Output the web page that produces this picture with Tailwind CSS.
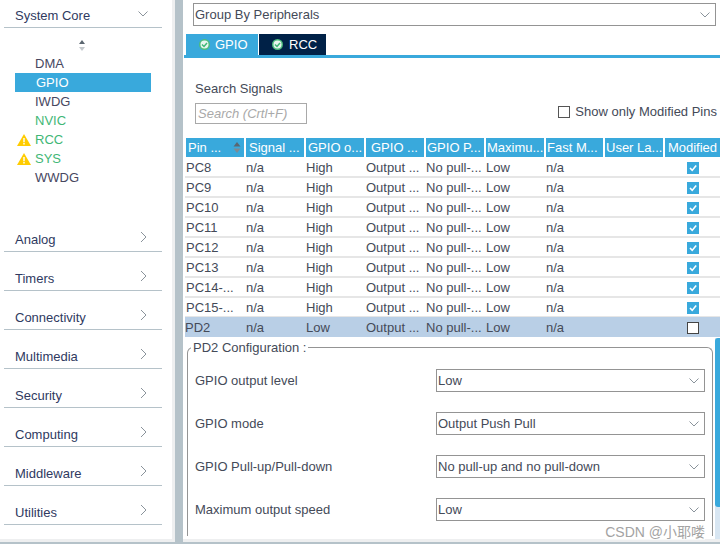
<!DOCTYPE html>
<html lang="en">
<head>
<meta charset="UTF-8">
<title>GPIO Configuration</title>
<script src="https://cdn.jsdelivr.net/npm/@tailwindcss/browser@4"></script>
</head>
<body class="m-0 overflow-hidden bg-white font-['Liberation_Sans','Noto_Sans_CJK_SC',sans-serif] text-[13px] text-[#444a58]">
<div class="flex h-[549px] w-[720px] flex-col overflow-hidden">
<div class="flex h-[542px]">

<!-- left categories -->
<aside class="h-full w-[175px] shrink-0 border-r-[3px] border-b-[3px] border-[#eeeff0] pl-1 text-[#2f3a5f]">
  <div class="flex h-[28px] w-[158px] items-start justify-between border-b border-[#b5c2c9] pt-[8px] pl-[11px] pr-[14px]">
    <span class="leading-[15px]">System Core</span>
    <svg class="mt-[3px]" width="10" height="6" viewBox="0 0 10 6" fill="none" stroke="#8a939b"><path d="M.5.5L5 5 9.5.5"/></svg>
  </div>
  <div class="flex h-[23px] w-[158px] items-end justify-center pr-[3px]">
    <svg width="8" height="11" viewBox="0 0 8 11"><path d="M4 0l3 4H1z" fill="#5b6670"/><path d="M4 11l3-4H1z" fill="#c3c8cc"/></svg>
  </div>
  <ul class="mt-[3px] h-[172px] leading-[19px]">
    <li class="h-[19px] pl-[31px] text-[#47475f]">DMA</li>
    <li class="ml-[11px] h-[19px] w-[136px] bg-[#39a9dc] pl-[21px] text-white">GPIO</li>
    <li class="h-[19px] pl-[31px] text-[#47475f]">IWDG</li>
    <li class="h-[19px] pl-[31px] text-[#3fb776]">NVIC</li>
    <li class="flex h-[19px] items-center pl-[13px] text-[#3fb776]">
      <svg class="mr-1" width="14" height="12" viewBox="0 0 14 12"><path d="M7 0l7 12H0z" fill="#ffcc00"/><path d="M6.3 4h1.4v4.2H6.3zM6.3 9h1.4v1.4H6.3z" fill="#fff"/></svg>RCC</li>
    <li class="flex h-[19px] items-center pl-[13px] text-[#3fb776]">
      <svg class="mr-1" width="14" height="12" viewBox="0 0 14 12"><path d="M7 0l7 12H0z" fill="#ffcc00"/><path d="M6.3 4h1.4v4.2H6.3zM6.3 9h1.4v1.4H6.3z" fill="#fff"/></svg>SYS</li>
    <li class="h-[19px] pl-[31px] text-[#47475f]">WWDG</li>
  </ul>
  <div class="flex h-[26px] w-[158px] items-start justify-between border-b border-[#b5c2c9] pl-[11px] pr-[14px]"><span class="leading-[15px] pt-[6px]">Analog</span><svg class="mt-[5px]" width="8" height="12" viewBox="0 0 8 12" fill="none" stroke="#8a939b"><path d="M1 1l5 5-5 5"/></svg></div>
  <div class="flex h-[39px] w-[158px] items-start justify-between border-b border-[#b5c2c9] pl-[11px] pr-[14px]"><span class="leading-[15px] pt-[19px]">Timers</span><svg class="mt-[18px]" width="8" height="12" viewBox="0 0 8 12" fill="none" stroke="#8a939b"><path d="M1 1l5 5-5 5"/></svg></div>
  <div class="flex h-[39px] w-[158px] items-start justify-between border-b border-[#b5c2c9] pl-[11px] pr-[14px]"><span class="leading-[15px] pt-[19px]">Connectivity</span><svg class="mt-[18px]" width="8" height="12" viewBox="0 0 8 12" fill="none" stroke="#8a939b"><path d="M1 1l5 5-5 5"/></svg></div>
  <div class="flex h-[39px] w-[158px] items-start justify-between border-b border-[#b5c2c9] pl-[11px] pr-[14px]"><span class="leading-[15px] pt-[19px]">Multimedia</span><svg class="mt-[18px]" width="8" height="12" viewBox="0 0 8 12" fill="none" stroke="#8a939b"><path d="M1 1l5 5-5 5"/></svg></div>
  <div class="flex h-[39px] w-[158px] items-start justify-between border-b border-[#b5c2c9] pl-[11px] pr-[14px]"><span class="leading-[15px] pt-[19px]">Security</span><svg class="mt-[18px]" width="8" height="12" viewBox="0 0 8 12" fill="none" stroke="#8a939b"><path d="M1 1l5 5-5 5"/></svg></div>
  <div class="flex h-[39px] w-[158px] items-start justify-between border-b border-[#b5c2c9] pl-[11px] pr-[14px]"><span class="leading-[15px] pt-[19px]">Computing</span><svg class="mt-[18px]" width="8" height="12" viewBox="0 0 8 12" fill="none" stroke="#8a939b"><path d="M1 1l5 5-5 5"/></svg></div>
  <div class="flex h-[39px] w-[158px] items-start justify-between border-b border-[#b5c2c9] pl-[11px] pr-[14px]"><span class="leading-[15px] pt-[19px]">Middleware</span><svg class="mt-[18px]" width="8" height="12" viewBox="0 0 8 12" fill="none" stroke="#8a939b"><path d="M1 1l5 5-5 5"/></svg></div>
  <div class="flex h-[39px] w-[158px] items-start justify-between border-b border-[#b5c2c9] pl-[11px] pr-[14px]"><span class="leading-[15px] pt-[19px]">Utilities</span><svg class="mt-[18px]" width="8" height="12" viewBox="0 0 8 12" fill="none" stroke="#8a939b"><path d="M1 1l5 5-5 5"/></svg></div>
</aside>

<div class="h-full w-[8px] shrink-0 bg-[#b5c2c9]"></div>

<!-- main panel -->
<main class="relative h-full w-[537px] shrink-0 border-b-[3px] border-[#eeeff0] pt-[3px]">
  <div class="ml-[10px] flex h-[23px] w-[523px] items-center justify-between border border-[#949494] pl-[1px] pr-[5px]">
    <span>Group By Peripherals</span>
    <svg width="10" height="6" viewBox="0 0 10 6" fill="none" stroke="#8a939b"><path d="M.5.5L5 5 9.5.5"/></svg>
  </div>
  <div class="mt-[8px] flex h-[21px] pl-[3px]">
    <div class="flex w-[72px] items-center gap-[5px] bg-[#39a9dc] pl-[13px] text-white">
      <svg width="11" height="11" viewBox="0 0 11 11"><circle cx="5.5" cy="5.5" r="5.5" fill="#4dbd7e"/><circle cx="5.5" cy="5.5" r="4" fill="#e8f5ee"/><path d="M3 5.5l2 2 3-3.6" fill="none" stroke="#3fb776" stroke-width="1.5"/></svg>GPIO</div>
    <div class="ml-px flex w-[67px] items-center gap-[6px] bg-[#002147] pl-[13px] text-white">
      <svg width="11" height="11" viewBox="0 0 11 11"><circle cx="5.5" cy="5.5" r="5.5" fill="#4dbd7e"/><circle cx="5.5" cy="5.5" r="4" fill="#e8f5ee"/><path d="M3 5.5l2 2 3-3.6" fill="none" stroke="#3fb776" stroke-width="1.5"/></svg>RCC</div>
  </div>
  <div class="ml-px h-[3px] bg-[#39a9dc]"></div>

  <div class="flex h-[80px] items-start justify-between pl-[12px] pr-[3px]">
    <div class="pt-[23px]">
      <div class="leading-[15px]">Search Signals</div>
      <div class="mt-[7px] flex h-[21px] w-[112px] items-center border border-[#a9a9a9] pl-[2px] italic text-[#a9a9a9]">Search (Crtl+F)</div>
    </div>
    <label class="mt-[46px] flex items-center gap-[5px] leading-[15px]"><span class="h-[12px] w-[12px] border border-[#555] bg-white"></span>Show only Modified Pins</label>
  </div>

  <!-- signals table -->
  <div class="ml-[3px] grid w-[534px] grid-cols-[58px_58px_58px_58px_58px_58px_57px_58px_55px] gap-x-[2px] whitespace-nowrap">
    <div class="relative flex h-[19px] items-center bg-[#39a9dc] pl-[2px] text-white">Pin ...<svg class="absolute right-[3px] top-[4px]" width="8" height="11" viewBox="0 0 8 11"><path d="M4 0l3.5 4.5H.5z" fill="#5b6670"/><path d="M4 11l3.5-4.5H.5z" fill="#7e8a92"/></svg></div>
    <div class="flex h-[19px] items-center overflow-hidden bg-[#39a9dc] pl-[3px] text-white">Signal ...</div>
    <div class="flex h-[19px] items-center overflow-hidden bg-[#39a9dc] pl-[2px] text-white">GPIO o...</div>
    <div class="flex h-[19px] items-center overflow-hidden bg-[#39a9dc] pl-[5px] text-white">GPIO ...</div>
    <div class="flex h-[19px] items-center overflow-hidden bg-[#39a9dc] pl-[1px] text-white">GPIO P...</div>
    <div class="flex h-[19px] items-center overflow-hidden bg-[#39a9dc] pl-[1px] text-white">Maximu...</div>
    <div class="flex h-[19px] items-center overflow-hidden bg-[#39a9dc] pl-[1px] text-white">Fast M...</div>
    <div class="flex h-[19px] items-center overflow-hidden bg-[#39a9dc] pl-[1px] text-white">User La...</div>
    <div class="flex h-[19px] items-center justify-center overflow-hidden bg-[#39a9dc] text-white">Modified</div>
  </div>
  <div class="mt-px whitespace-nowrap">
    <div class="ml-[2px] grid h-[20px] w-[535px] grid-cols-[60px_60px_60px_60px_60px_60px_59px_60px_55px] items-center border-b-2 border-[#e6e6e6] pl-px"><span>PC8</span><span>n/a</span><span>High</span><span>Output ...</span><span>No pull-...</span><span>Low</span><span>n/a</span><span></span><span class="flex justify-center"><svg width="12" height="12" viewBox="0 0 12 12"><rect width="12" height="12" fill="#39a9dc"/><path d="M3 6l2.2 2.4L9.2 3.5" fill="none" stroke="#fff" stroke-width="1.6"/></svg></span></div>
    <div class="ml-[2px] grid h-[20px] w-[535px] grid-cols-[60px_60px_60px_60px_60px_60px_59px_60px_55px] items-center border-b-2 border-[#e6e6e6] pl-px"><span>PC9</span><span>n/a</span><span>High</span><span>Output ...</span><span>No pull-...</span><span>Low</span><span>n/a</span><span></span><span class="flex justify-center"><svg width="12" height="12" viewBox="0 0 12 12"><rect width="12" height="12" fill="#39a9dc"/><path d="M3 6l2.2 2.4L9.2 3.5" fill="none" stroke="#fff" stroke-width="1.6"/></svg></span></div>
    <div class="ml-[2px] grid h-[20px] w-[535px] grid-cols-[60px_60px_60px_60px_60px_60px_59px_60px_55px] items-center border-b-2 border-[#e6e6e6] pl-px"><span>PC10</span><span>n/a</span><span>High</span><span>Output ...</span><span>No pull-...</span><span>Low</span><span>n/a</span><span></span><span class="flex justify-center"><svg width="12" height="12" viewBox="0 0 12 12"><rect width="12" height="12" fill="#39a9dc"/><path d="M3 6l2.2 2.4L9.2 3.5" fill="none" stroke="#fff" stroke-width="1.6"/></svg></span></div>
    <div class="ml-[2px] grid h-[20px] w-[535px] grid-cols-[60px_60px_60px_60px_60px_60px_59px_60px_55px] items-center border-b-2 border-[#e6e6e6] pl-px"><span>PC11</span><span>n/a</span><span>High</span><span>Output ...</span><span>No pull-...</span><span>Low</span><span>n/a</span><span></span><span class="flex justify-center"><svg width="12" height="12" viewBox="0 0 12 12"><rect width="12" height="12" fill="#39a9dc"/><path d="M3 6l2.2 2.4L9.2 3.5" fill="none" stroke="#fff" stroke-width="1.6"/></svg></span></div>
    <div class="ml-[2px] grid h-[20px] w-[535px] grid-cols-[60px_60px_60px_60px_60px_60px_59px_60px_55px] items-center border-b-2 border-[#e6e6e6] pl-px"><span>PC12</span><span>n/a</span><span>High</span><span>Output ...</span><span>No pull-...</span><span>Low</span><span>n/a</span><span></span><span class="flex justify-center"><svg width="12" height="12" viewBox="0 0 12 12"><rect width="12" height="12" fill="#39a9dc"/><path d="M3 6l2.2 2.4L9.2 3.5" fill="none" stroke="#fff" stroke-width="1.6"/></svg></span></div>
    <div class="ml-[2px] grid h-[20px] w-[535px] grid-cols-[60px_60px_60px_60px_60px_60px_59px_60px_55px] items-center border-b-2 border-[#e6e6e6] pl-px"><span>PC13</span><span>n/a</span><span>High</span><span>Output ...</span><span>No pull-...</span><span>Low</span><span>n/a</span><span></span><span class="flex justify-center"><svg width="12" height="12" viewBox="0 0 12 12"><rect width="12" height="12" fill="#39a9dc"/><path d="M3 6l2.2 2.4L9.2 3.5" fill="none" stroke="#fff" stroke-width="1.6"/></svg></span></div>
    <div class="ml-[2px] grid h-[20px] w-[535px] grid-cols-[60px_60px_60px_60px_60px_60px_59px_60px_55px] items-center border-b-2 border-[#e6e6e6] pl-px"><span>PC14-...</span><span>n/a</span><span>High</span><span>Output ...</span><span>No pull-...</span><span>Low</span><span>n/a</span><span></span><span class="flex justify-center"><svg width="12" height="12" viewBox="0 0 12 12"><rect width="12" height="12" fill="#39a9dc"/><path d="M3 6l2.2 2.4L9.2 3.5" fill="none" stroke="#fff" stroke-width="1.6"/></svg></span></div>
    <div class="ml-[2px] grid h-[20px] w-[535px] grid-cols-[60px_60px_60px_60px_60px_60px_59px_60px_55px] items-center border-b-2 border-[#e6e6e6] pl-px"><span>PC15-...</span><span>n/a</span><span>High</span><span>Output ...</span><span>No pull-...</span><span>Low</span><span>n/a</span><span></span><span class="flex justify-center"><svg width="12" height="12" viewBox="0 0 12 12"><rect width="12" height="12" fill="#39a9dc"/><path d="M3 6l2.2 2.4L9.2 3.5" fill="none" stroke="#fff" stroke-width="1.6"/></svg></span></div>
    <div class="-mt-px ml-[2px] grid h-[20px] w-[535px] grid-cols-[60px_60px_60px_60px_60px_60px_59px_60px_55px] items-center bg-[#b9cfe6] pl-px pt-px"><span class="-ml-px">PD2</span><span>n/a</span><span>Low</span><span>Output ...</span><span>No pull-...</span><span>Low</span><span>n/a</span><span></span><span class="flex justify-center"><span class="h-[12px] w-[12px] border border-[#444] bg-white"></span></span></div>
  </div>

  <!-- config group -->
  <div class="relative ml-[4px] mt-[10px] h-[189px] w-[526px] rounded-t-[6px] border-x border-t border-[#949494]">
    <span class="absolute left-[3px] top-[-8px] bg-white px-[2px] leading-[15px]">PD2 Configuration :</span>
    <div class="mt-[21px] flex h-[23px] items-center justify-between pl-[7px] pr-[7px]"><span>GPIO output level</span><div class="flex h-[23px] w-[269px] items-center justify-between border border-[#949494] pl-[1px] pr-[5px]"><span>Low</span><svg width="10" height="6" viewBox="0 0 10 6" fill="none" stroke="#8a939b"><path d="M.5.5L5 5 9.5.5"/></svg></div></div>
    <div class="mt-[20px] flex h-[23px] items-center justify-between pl-[7px] pr-[7px]"><span>GPIO mode</span><div class="flex h-[23px] w-[269px] items-center justify-between border border-[#949494] pl-[1px] pr-[5px]"><span>Output Push Pull</span><svg width="10" height="6" viewBox="0 0 10 6" fill="none" stroke="#8a939b"><path d="M.5.5L5 5 9.5.5"/></svg></div></div>
    <div class="mt-[20px] flex h-[23px] items-center justify-between pl-[7px] pr-[7px]"><span>GPIO Pull-up/Pull-down</span><div class="flex h-[23px] w-[269px] items-center justify-between border border-[#949494] pl-[1px] pr-[5px]"><span>No pull-up and no pull-down</span><svg width="10" height="6" viewBox="0 0 10 6" fill="none" stroke="#8a939b"><path d="M.5.5L5 5 9.5.5"/></svg></div></div>
    <div class="mt-[20px] flex h-[23px] items-center justify-between pl-[7px] pr-[7px]"><span>Maximum output speed</span><div class="flex h-[23px] w-[269px] items-center justify-between border border-[#949494] pl-[1px] pr-[5px]"><span>Low</span><svg width="10" height="6" viewBox="0 0 10 6" fill="none" stroke="#8a939b"><path d="M.5.5L5 5 9.5.5"/></svg></div></div>
  </div>

  <div class="absolute right-0 top-[338px] h-[201px] w-[5px] bg-[#d8e6f2]"><div class="h-[169px] rounded-l-[3px] bg-[#39a9dc]"></div></div>
  <div class="absolute bottom-[-1px] right-[15px] bg-white/60 text-[14px] leading-[16px] text-[#a3a3a3]">CSDN @小耶喽</div>
</main>
</div>
<div class="h-[2px] bg-[#b5c2c9]"></div>
</div>
</body>
</html>
